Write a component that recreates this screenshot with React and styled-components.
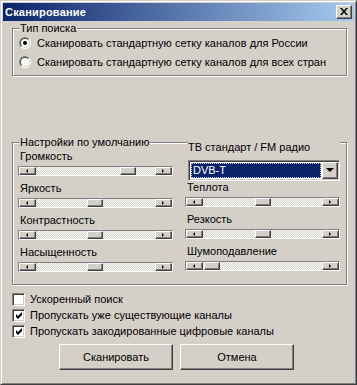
import React from 'react';
import styled, { createGlobalStyle } from 'styled-components';

const Global = createGlobalStyle`
  html, body { margin: 0; padding: 0; background: #d4d0c8; }
  body { font-family: "Liberation Sans", Arial, sans-serif; font-size: 11px; color: #000; }
`;

const Window = styled.div`
  width: 357px;
  height: 385px;
  box-sizing: border-box;
  background: #d4d0c8;
  border: 1px solid;
  border-color: #d4d0c8 #404040 #404040 #d4d0c8;
  box-shadow: inset 1px 1px #fff, inset -1px -1px #808080;
  padding: 2px;
  display: flex;
  flex-direction: column;
`;

const TitleBar = styled.div`
  height: 18px;
  flex: none;
  display: flex;
  align-items: center;
  justify-content: space-between;
  padding: 0 2px 0 2px;
  background: linear-gradient(to right, #0a246a, #a6caf0);
`;

const TitleText = styled.span`
  color: #fff;
  font-weight: bold;
  font-size: 11px;
  letter-spacing: 0.2px;
`;

const CloseBtn = styled.div`
  width: 16px;
  height: 14px;
  box-sizing: border-box;
  background: #d4d0c8;
  border: 1px solid;
  border-color: #fff #404040 #404040 #fff;
  box-shadow: inset -1px -1px #808080;
  display: flex;
  align-items: center;
  justify-content: center;
  padding: 0 1px 1px 0;
`;

const Content = styled.div`
  flex: 1;
  display: flex;
  flex-direction: column;
  padding: 0 7px 0 9px;
`;

const Group = styled.div`
  position: relative;
  box-sizing: border-box;
  height: ${p => p.$h}px;
  margin-top: ${p => p.$mt}px;
  border: 1px solid #808080;
  box-shadow: 1px 1px 0 #fff, inset 1px 1px 0 #fff;
  padding: ${p => p.$pad};
`;

const Legend = styled.span`
  position: absolute;
  top: -7px;
  left: 6px;
  padding: 0 1px;
  line-height: 13px;
  background: #d4d0c8;
  white-space: nowrap;
`;

const OptionRow = styled.label`
  display: flex;
  align-items: center;
  gap: ${p => p.$gap}px;
  height: 16px;
  margin-top: ${p => p.$mt || 0}px;
  white-space: nowrap;
`;

const Radio = styled.span`
  position: relative;
  flex: none;
  width: 12px;
  height: 12px;
  box-sizing: border-box;
  border-radius: 50%;
  border: 1px solid;
  border-color: #808080 #fff #fff #808080;
  background: #fff;
  &::before {
    content: '';
    position: absolute;
    inset: 0;
    border-radius: 50%;
    border: 1px solid;
    border-color: #404040 #d4d0c8 #d4d0c8 #404040;
  }
  &::after {
    content: '';
    display: ${p => (p.$on ? 'block' : 'none')};
    position: absolute;
    left: 3px;
    top: 3px;
    width: 4px;
    height: 4px;
    border-radius: 50%;
    background: #000;
  }
`;

const Columns = styled.div`
  display: grid;
  grid-template-columns: 155px 155px;
  column-gap: 12px;
`;

const Column = styled.div`
  display: flex;
  flex-direction: column;
  margin-top: ${p => p.$mt}px;
`;

const FieldLabel = styled.div`
  height: 13px;
  line-height: 13px;
  white-space: nowrap;
  margin-left: ${p => p.$ml || 0}px;
  margin-top: ${p => p.$mt || 0}px;
  background: #d4d0c8;
  position: relative;
`;

const Scroll = styled.div`
  display: flex;
  width: 155px;
  height: 10px;
  box-sizing: border-box;
  margin-top: 3px;
  border: 1px solid;
  border-color: #808080 #fff #fff #808080;
  background: #d4d0c8;
`;

const raised = `
  box-sizing: border-box;
  background: #d4d0c8;
  border: 1px solid;
  border-color: #fff #404040 #404040 #fff;
  box-shadow: inset -1px -1px #808080;
`;

const ArrowBtn = styled.div`
  ${raised}
  flex: none;
  width: 17px;
  height: 8px;
  display: flex;
  align-items: center;
  justify-content: center;
  padding: 0 1px 1px 0;
  &::after {
    content: '';
    width: 0;
    height: 0;
    border-top: 2px solid transparent;
    border-bottom: 2px solid transparent;
    ${p => (p.$dir === 'left' ? 'border-right: 2px solid #000;' : 'border-left: 2px solid #000;')}
  }
`;

const Track = styled.div`
  flex: 1;
  display: flex;
  background: repeating-conic-gradient(#fff 0 25%, #d4d0c8 0 50%) 0 0 / 2px 2px;
`;

const Thumb = styled.div`
  ${raised}
  flex: none;
  width: 16px;
  height: 8px;
`;

const Combo = styled.div`
  display: flex;
  width: 152px;
  height: 21px;
  box-sizing: border-box;
  margin: 6px 0 0 3px;
  border: 1px solid;
  border-color: #808080 #fff #fff #808080;
  box-shadow: inset 1px 1px #404040, inset -1px -1px #d4d0c8;
  background: #fff;
  padding: 2px;
  gap: 1px;
`;

const ComboValue = styled.div`
  flex: 1;
  background: #0a246a;
  color: #fff;
  line-height: 15px;
  padding-left: 2px;
  outline: 1px dotted #d4d0c8;
  outline-offset: -1px;
`;

const ComboBtn = styled.div`
  ${raised}
  width: 16px;
  height: 17px;
  margin: -1px -1px -1px 0;
  flex: none;
  display: flex;
  align-items: center;
  justify-content: center;
  padding: 0 1px 1px 0;
  &::after {
    content: '';
    width: 0;
    height: 0;
    border-left: 4px solid transparent;
    border-right: 4px solid transparent;
    border-top: 4px solid #000;
  }
`;

const CheckBox = styled.span`
  flex: none;
  width: 13px;
  height: 13px;
  box-sizing: border-box;
  border: 1px solid;
  border-color: #808080 #fff #fff #808080;
  box-shadow: inset 1px 1px #404040, inset -1px -1px #d4d0c8;
  background: #fff;
  display: flex;
  align-items: center;
  justify-content: center;
  padding: 1px 0 0 1px;
`;

const Buttons = styled.div`
  display: flex;
  gap: 7px;
  padding-left: 47px;
  margin-top: 5px;
`;

const Button = styled.button`
  width: 114px;
  height: 26px;
  box-sizing: border-box;
  font: inherit;
  color: #000;
  background: #d4d0c8;
  border: 1px solid;
  border-color: #fff #404040 #404040 #fff;
  box-shadow: inset -1px -1px #808080;
  padding: 0;
`;

const CheckMark = () => (
  <svg width="7" height="7" viewBox="0 0 7 7">
    <polygon points="0,2 2,4 6,0 6,3 2,7 0,5" fill="#000" />
  </svg>
);

const CloseIcon = () => (
  <svg width="8" height="7" viewBox="0 0 8 7">
    <path d="M0 0h2l2 2.4L6 0h2L5 3.5L8 7H6L4 4.6L2 7H0l3-3.5z" fill="#000" />
  </svg>
);

const Slider = ({ pos }) => (
  <Scroll>
    <ArrowBtn $dir="left" />
    <Track>
      <Thumb style={{ marginLeft: pos }} />
    </Track>
    <ArrowBtn $dir="right" />
  </Scroll>
);

const leftSliders = [
  ['Громкость', 84],
  ['Яркость', 51],
  ['Контрастность', 51],
  ['Насыщенность', 51],
];
const rightSliders = [
  ['Теплота', 52],
  ['Резкость', 52],
  ['Шумоподавление', 1],
];

const checks = [
  ['Ускоренный поиск', false],
  ['Пропускать уже существующие каналы', true],
  ['Пропускать закодированные цифровые каналы', true],
];

export default function App() {
  return (
    <>
      <Global />
      <Window>
        <TitleBar>
          <TitleText>Сканирование</TitleText>
          <CloseBtn>
            <CloseIcon />
          </CloseBtn>
        </TitleBar>
        <Content>
          <Group $h={48} $mt={7} $pad="6px 0 0 6px">
            <Legend>Тип поиска</Legend>
            <OptionRow $gap={6}>
              <Radio $on />
              Сканировать стандартную сетку каналов для России
            </OptionRow>
            <OptionRow $gap={6} $mt={3}>
              <Radio />
              Сканировать стандартную сетку каналов для всех стран
            </OptionRow>
          </Group>

          <Group $h={143} $mt={66} $pad="0 0 0 5px">
            <Legend>Настройки по умолчанию</Legend>
            <Columns>
              <Column $mt={7}>
                {leftSliders.map(([name, pos], i) => (
                  <React.Fragment key={name}>
                    <FieldLabel $ml={2} $mt={i ? 6 : 0}>{name}</FieldLabel>
                    <Slider pos={pos} />
                  </React.Fragment>
                ))}
              </Column>
              <Column $mt={-2}>
                <FieldLabel $ml={3}>ТВ стандарт / FM радио</FieldLabel>
                <Combo>
                  <ComboValue>DVB-T</ComboValue>
                  <ComboBtn />
                </Combo>
                {rightSliders.map(([name, pos], i) => (
                  <React.Fragment key={name}>
                    <FieldLabel $ml={2} $mt={i ? 6 : 0}>{name}</FieldLabel>
                    <Slider pos={pos} />
                  </React.Fragment>
                ))}
              </Column>
            </Columns>
          </Group>

          {checks.map(([text, on], i) => (
            <OptionRow key={text} $gap={5} $mt={i ? 0 : 6}>
              <CheckBox>{on && <CheckMark />}</CheckBox>
              {text}
            </OptionRow>
          ))}

          <Buttons>
            <Button>Сканировать</Button>
            <Button>Отмена</Button>
          </Buttons>
        </Content>
      </Window>
    </>
  );
}
